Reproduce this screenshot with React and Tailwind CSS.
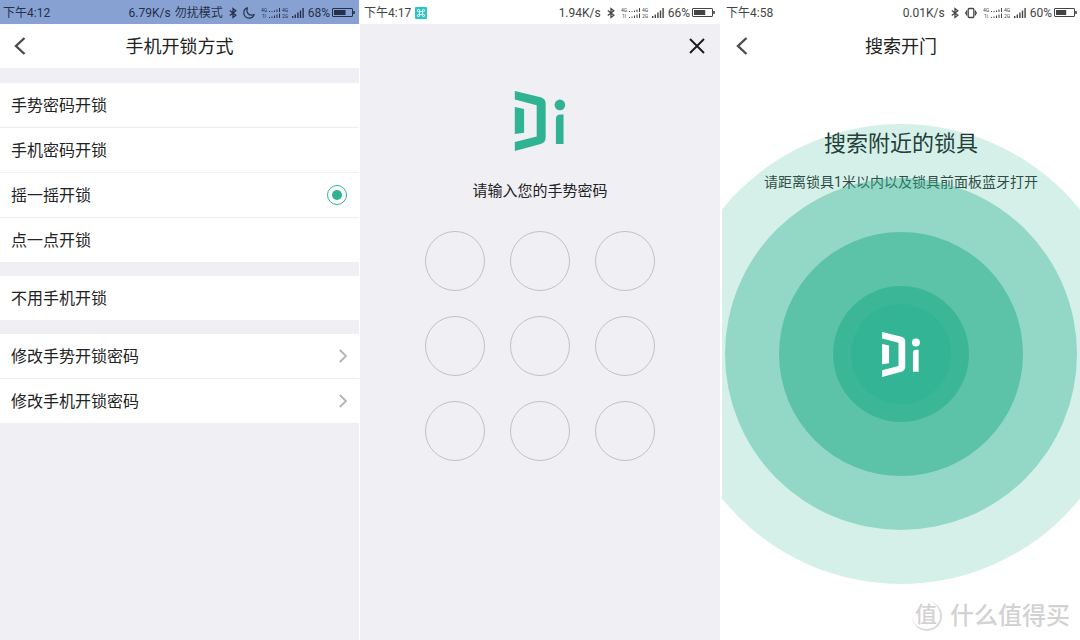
import React, { useState } from "react";

function BluetoothIcon() {
  return (
    <svg className="h-3 w-2 shrink-0" viewBox="0 0 8 12" fill="none" stroke="currentColor" strokeWidth="1.3" aria-hidden="true">
      <path d="M0.8 3.6 6.8 8.2 4 10.400V1.600L6.8 3.800 0.8 8.4" />
    </svg>
  );
}

function MoonIcon() {
  return (
    <svg className="size-3 shrink-0" viewBox="0 0 12 12" fill="none" stroke="currentColor" strokeWidth="1.2" strokeLinejoin="round" aria-hidden="true">
      <path d="M4.4 0.9C2.2 1.6 0.8 3.6 0.8 5.9c0 3 2.3 5.3 5.2 5.3 2.4 0 4.500-1.500 5.200-3.700-2.900 1-5.300 0.400-6.500-1.400C3.800 4.700 3.800 2.700 4.400 0.900Z" />
    </svg>
  );
}

function VibrateIcon() {
  return (
    <svg className="h-3 w-3 shrink-0" viewBox="0 0 12 12" fill="none" stroke="currentColor" strokeWidth="1.3" aria-hidden="true">
      <rect x="3.200" y="1.500" width="5.600" height="9" rx="1" />
      <path d="M1.600 3.500V5L0.700 6 1.600 7V8.500M10.400 3.500V5L11.300 6 10.400 7V8.500" />
    </svg>
  );
}

function DualSimIcon() {
  return (
    <svg className="h-3 w-7 shrink-0 font-['Roboto',sans-serif]" viewBox="0 0 28 12" fill="currentColor" aria-hidden="true">
      <g fontSize="5">
        <text x="0" y="5">4G</text>
        <text x="1" y="11">1l</text>
        <text x="21" y="5">4G</text>
        <text x="21" y="11">2G</text>
      </g>
      <path d="M8 4h1v1H8zM10.500 4h1v1h-1zM13 3.500h1V5h-1zM15.500 2.500h1V5h-1zM18 1h1v4h-1zM8 10h1v1H8zM10.500 9.500h1V11h-1zM13 8.500h1V11h-1zM15.500 7.500h1V11h-1zM18 6.500h1V11h-1z" />
    </svg>
  );
}

function SignalIcon() {
  return (
    <svg className="h-3 w-3 shrink-0" viewBox="0 0 12 12" fill="currentColor" aria-hidden="true">
      <path d="M0 9h1.400v2H0zM2.600 7.500H4V11H2.600zM5.200 5.500h1.400V11H5.200zM7.800 3.500h1.400V11H7.800zM10.400 1h1.400v10h-1.400z" />
    </svg>
  );
}

function BatteryIcon({ level }) {
  return (
    <svg className="h-3 w-[23px] shrink-0" viewBox="0 0 23 12" fill="none" stroke="currentColor" aria-hidden="true">
      <rect x="0.500" y="1.500" width="20" height="8" rx="0.500" />
      <rect x="2" y="3" width={17 * level} height="5" fill="currentColor" stroke="none" />
      <path d="M22 4v3" strokeWidth="1.600" />
    </svg>
  );
}

function Brand({ className }) {
  return (
    <svg className={className} viewBox="44 32 152 181" fill="currentColor" role="img" aria-label="Di">
      <path d="M44 32 122 51Q137 55 137 70V172Q137 187 122 192L44 213V186L110 169V75L44 58Z" />
      <path d="M44 80 72 86V158L44 162Z" />
      <circle cx="180" cy="74" r="16" />
      <path d="M168 117Q168 103 181 103H191V192H168Z" />
    </svg>
  );
}

function StatusBar({ time, speed, mode, battery, badge, extra, className }) {
  return (
    <div className={`flex h-6 items-center justify-between pt-0.5 text-xs whitespace-nowrap ${className}`}>
      <div className="flex items-center gap-1">
        <span>{time}</span>
        {badge}
      </div>
      <div className="flex items-center">
        <span>{speed}</span>
        {mode && <span className="ml-1">{mode}</span>}
        <div className="mx-1.5 flex items-center gap-1.5">
          <BluetoothIcon />
          {extra}
        </div>
        <div className="mr-1 flex items-center gap-[3px]">
          <DualSimIcon />
          <SignalIcon />
        </div>
        <span className="mr-0.5">{battery}%</span>
        <BatteryIcon level={battery / 100} />
      </div>
    </div>
  );
}

function Header({ title }) {
  return (
    <header className="grid h-11 grid-cols-[44px_1fr_44px] items-center bg-white">
      <button type="button" aria-label="返回" className="flex h-11 items-center pl-3.5 text-[#4b4b4b]">
        <svg className="h-[18px] w-3" viewBox="0 0 12 18" fill="none" stroke="currentColor" strokeWidth="2.400" aria-hidden="true">
          <path d="M10.500 1 2 9 10.500 17" />
        </svg>
      </button>
      <h1 className="pt-0.5 text-center text-lg text-[#222]">{title}</h1>
    </header>
  );
}

function OptionRow({ label, value, onChange }) {
  return (
    <label className="flex h-11 cursor-pointer items-center justify-between bg-white pr-3 pl-[11px]">
      <span className="pt-0.5">{label}</span>
      <input
        type="radio"
        name="unlock"
        checked={value === label}
        onChange={() => onChange(label)}
        className="grid size-5 appearance-none place-content-center rounded-full checked:border checked:border-[#2fb392] checked:before:size-2.5 checked:before:rounded-full checked:before:bg-[#2fb392] checked:before:content-['']"
      />
    </label>
  );
}

function LinkRow({ label }) {
  return (
    <a href="#" className="flex h-11 items-center justify-between bg-white pr-3 pl-[11px]">
      <span className="pt-0.5">{label}</span>
      <svg className="h-3.5 w-2" viewBox="0 0 8 14" fill="none" stroke="#b4b4b4" strokeWidth="1.800" aria-hidden="true">
        <path d="M0.800 1 7 7 0.800 13" />
      </svg>
    </a>
  );
}

const unlockMethods = ["手势密码开锁", "手机密码开锁", "摇一摇开锁", "点一点开锁"];

function MethodScreen() {
  const [method, setMethod] = useState("摇一摇开锁");
  return (
    <section className="border-r border-white bg-[#efeff4]">
      <StatusBar
        time="下午4:12"
        speed="6.79K/s"
        mode="勿扰模式"
        battery={68}
        extra={<MoonIcon />}
        className="bg-[#87a1d3] pr-1 pl-[3px] text-[#26304a]"
      />
      <Header title="手机开锁方式" />
      <div className="flex flex-col gap-3.5 pt-[15px] text-base text-[#222]">
        <div className="grid gap-px bg-[#ededf0]">
          {unlockMethods.map((m) => (
            <OptionRow key={m} label={m} value={method} onChange={setMethod} />
          ))}
        </div>
        <OptionRow label="不用手机开锁" value={method} onChange={setMethod} />
        <nav className="grid gap-px bg-[#ededf0]">
          <LinkRow label="修改手势开锁密码" />
          <LinkRow label="修改手机开锁密码" />
        </nav>
      </div>
    </section>
  );
}

function GestureScreen() {
  const badge = (
    <svg className="size-3" viewBox="0 0 12 12" fill="none" stroke="#fff" aria-hidden="true">
      <rect width="12" height="12" rx="1" fill="#2bc4c4" stroke="none" />
      <path d="M4.500 4.500h3v3h-3z" />
      <circle cx="3.500" cy="3.500" r="1.100" />
      <circle cx="8.500" cy="3.500" r="1.100" />
      <circle cx="3.500" cy="8.500" r="1.100" />
      <circle cx="8.500" cy="8.500" r="1.100" />
    </svg>
  );
  return (
    <section className="bg-[#efeff4]">
      <StatusBar
        time="下午4:17"
        speed="1.94K/s"
        battery={66}
        badge={badge}
        className="bg-white pr-[5px] pl-1 text-[#444]"
      />
      <div className="flex h-11 justify-end">
        <button type="button" aria-label="关闭" className="flex items-center px-[15px] text-[#1c1c1c]">
          <svg className="size-4" viewBox="0 0 16 16" fill="none" stroke="currentColor" strokeWidth="1.900" aria-hidden="true">
            <path d="M1 1 15 15M15 1 1 15" />
          </svg>
        </button>
      </div>
      <div className="flex flex-col items-center pt-[23px]">
        <Brand className="h-[60px] w-[52px] text-[#2fb392]" />
        <p className="mt-7 text-[15px] leading-6 text-[#222]">请输入您的手势密码</p>
        <div className="mt-7 grid grid-cols-3 gap-[25px]">
          {[1, 2, 3, 4, 5, 6, 7, 8, 9].map((n) => (
            <button key={n} type="button" aria-label={`${n}`} className="size-[60px] rounded-full border border-[#c2c2c6]" />
          ))}
        </div>
      </div>
    </section>
  );
}

function SearchScreen() {
  return (
    <section className="relative overflow-hidden border-l-2 border-white bg-white">
      <StatusBar
        time="下午4:58"
        speed="0.01K/s"
        battery={60}
        extra={<VibrateIcon />}
        className="pr-[3px] pl-1 text-[#444]"
      />
      <Header title="搜索开门" />
      <div className="pt-[60px] text-center">
        <h2 className="text-[22px] leading-8 text-[#222]">搜索附近的锁具</h2>
        <p className="mt-2.5 text-sm leading-6 text-[#333]">请距离锁具1米以内以及锁具前面板蓝牙打开</p>
      </div>
      <div className="pointer-events-none absolute top-[124px] left-1/2 grid size-[460px] -translate-x-1/2 place-items-center">
        <svg className="col-start-1 row-start-1 size-[460px]" viewBox="0 0 460 460" fill="#2fb392" aria-hidden="true">
          <circle cx="230" cy="230" r="230" fillOpacity="0.2" />
          <circle cx="230" cy="230" r="176" fillOpacity="0.4" />
          <circle cx="230" cy="230" r="122" fillOpacity="0.55" />
          <circle cx="230" cy="230" r="68" fillOpacity="0.72" />
          <circle cx="230" cy="230" r="50" fillOpacity="0.6" />
        </svg>
        <Brand className="col-start-1 row-start-1 h-[45px] w-[38px] text-white" />
      </div>
      <div className="absolute right-2.5 bottom-2 flex items-center gap-2 text-[#d2d2d2]">
        <span className="grid size-[30px] place-items-center rounded-full border-r-2 border-b-2 border-[#d8d8d8] text-[22px] leading-none font-medium">
          值
        </span>
        <span className="text-2xl font-medium">什么值得买</span>
      </div>
    </section>
  );
}

export default function App() {
  return (
    <main className="grid min-h-screen grid-cols-3 font-['Roboto','Noto_Sans_CJK_SC',sans-serif]">
      <MethodScreen />
      <GestureScreen />
      <SearchScreen />
    </main>
  );
}
